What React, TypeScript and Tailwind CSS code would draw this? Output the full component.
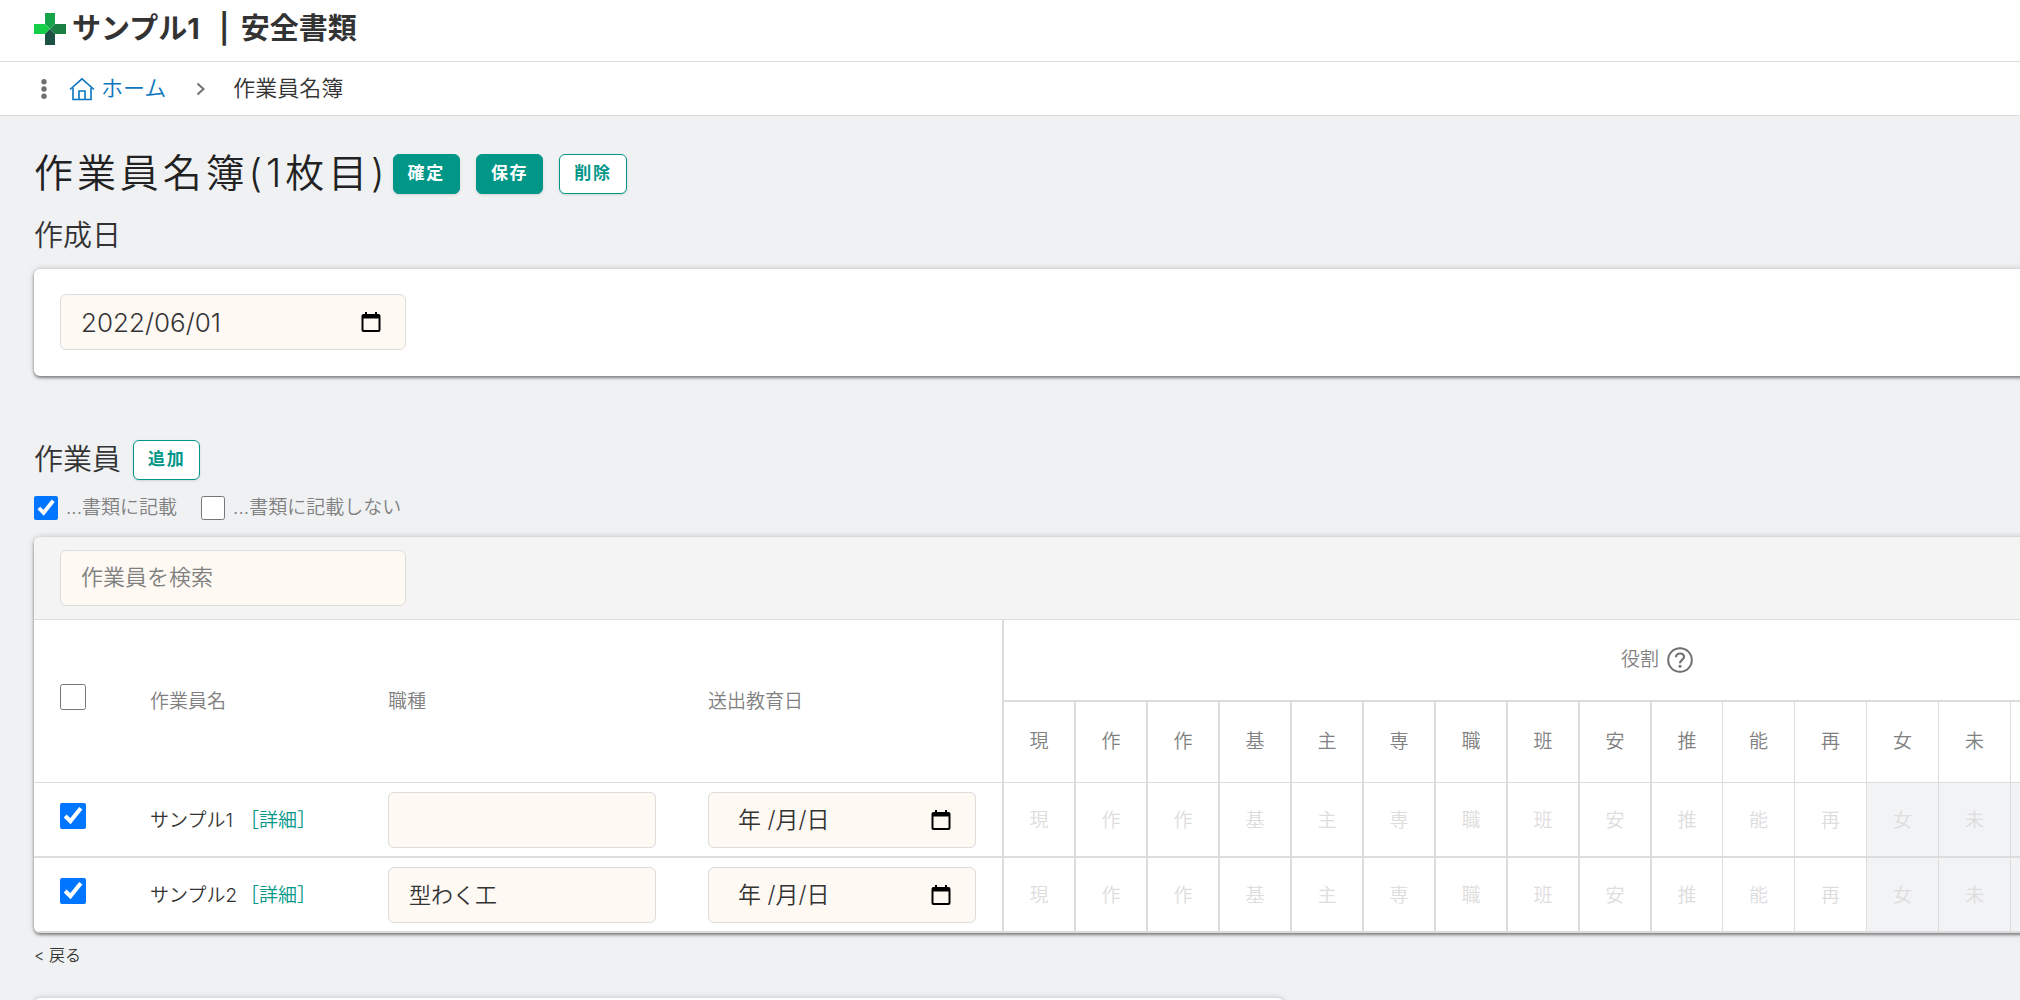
import React from 'react';

const roles = ['現', '作', '作', '基', '主', '専', '職', '班', '安', '推', '能', '再', '女', '未', '', '', '', ''];

const workers = [
  { id: 1, name: 'サンプル1', job: '' },
  { id: 2, name: 'サンプル2', job: '型わく工' },
];

const cardShadow = 'shadow-[0_2px_3px_rgba(0,0,0,0.4),0_0_6px_rgba(0,0,0,0.2)]';
const field = 'h-14 rounded-md border border-[#dcdcdc] bg-[#fef9f3] text-[#333]';

function Logo() {
  return (
    <svg width="32" height="32" viewBox="0 0 32 32" aria-hidden="true">
      <path d="M11 0h10v11l-5 5-5-5z" fill="#16a34a" />
      <path d="M0 11h11l5 5-5 5H0z" fill="#15cf49" />
      <path d="M32 11H21l-5 5 5 5h11z" fill="#1a7f43" />
      <path d="M11 32h10V21l-5-5-5 5z" fill="#1b5244" />
    </svg>
  );
}

function HomeIcon() {
  return (
    <svg width="26" height="24" viewBox="0 0 26 24" fill="none" stroke="currentColor" strokeWidth="1.6" aria-hidden="true">
      <path d="M1 12.5 13 1.8l12 10.7" />
      <path d="M4 10.5V22.5h18V10.5" />
      <path d="M10 22.5V14h6v8.5" />
    </svg>
  );
}

function CalendarIcon() {
  return (
    <svg width="20" height="20" viewBox="0 0 20 20" aria-hidden="true">
      <path d="M4 0h2v2h8V0h2v2h1.500a2 2 0 0 1 2 2v14a2 2 0 0 1-2 2h-15a2 2 0 0 1-2-2V4a2 2 0 0 1 2-2H4zM2.500 6.500V18h15V6.500z" fill="#000" fillRule="evenodd" />
    </svg>
  );
}

function HelpIcon() {
  return (
    <svg width="26" height="26" viewBox="0 0 26 26" fill="none" stroke="#707070" strokeWidth="2" aria-hidden="true">
      <circle cx="13" cy="13" r="11.800" />
      <path d="M9 10.300c0-2.200 1.700-3.800 4-3.800s4 1.500 4 3.600c0 2.700-4 3-4 6.100" strokeWidth="2.200" />
      <circle cx="13" cy="19.300" r="1.500" fill="#707070" stroke="none" />
    </svg>
  );
}

function DateField({ id, label, value, className, inputClass }: { id: string; label: string; value: string; className: string; inputClass: string }) {
  return (
    <div className={`flex items-center ${field} ${className}`}>
      <input id={id} type="text" aria-label={label} defaultValue={value} className={`h-full min-w-0 flex-1 bg-transparent outline-none ${inputClass}`} />
      <button type="button" aria-label="カレンダーを開く" className="mr-6 shrink-0">
        <CalendarIcon />
      </button>
    </div>
  );
}

function Button({ children, primary = false }: { children: React.ReactNode; primary?: boolean }) {
  return (
    <button
      type="button"
      className={`h-10 rounded-md border border-[#009688] px-3.5 text-[17px] font-bold tracking-widest shadow-sm ${
        primary ? 'bg-[#009688] text-white' : 'bg-white text-[#009688]'
      }`}
    >
      {children}
    </button>
  );
}

export default function App() {
  return (
    <div className="h-screen overflow-hidden bg-[#eff1f3] font-['Inter','Noto_Sans_CJK_JP',sans-serif] font-[350] text-[#333]">
      <header className="flex h-[62px] items-center gap-1.5 border-b border-[#dcdcdc] bg-white pb-1 pl-[34px]">
        <Logo />
        <p className="text-[29px] font-bold leading-10">
          サンプル1<span className="ml-3 mr-1 font-semibold"> | </span>安全書類
        </p>
      </header>

      <nav aria-label="パンくずリスト" className="flex h-[54px] items-center border-b border-[#dcdcdc] bg-white pl-10 text-[22px]">
        <svg width="8" height="20" viewBox="0 0 8 20" fill="#707070" aria-hidden="true">
          <circle cx="4" cy="2.700" r="2.700" />
          <circle cx="4" cy="10" r="2.700" />
          <circle cx="4" cy="17.300" r="2.700" />
        </svg>
        <a href="#home" className="ml-[21px] flex items-center gap-1.5 text-[#0b76bd]">
          <HomeIcon />
          ホーム
        </a>
        <svg width="10" height="14" viewBox="0 0 10 14" fill="none" stroke="#707070" strokeWidth="2" className="ml-[30px]" aria-hidden="true">
          <path d="m1.500 1.500 6 5.500-6 5.500" />
        </svg>
        <span className="ml-[27px]">作業員名簿</span>
      </nav>

      <main className="w-max min-w-full pl-[34px] pt-8">
        <div className="flex h-[51px] items-center gap-1">
          <h1 className="text-[39px] tracking-widest text-[#222]">作業員名簿(1枚目)</h1>
          <div className="flex gap-4">
            <Button primary>確定</Button>
            <Button primary>保存</Button>
            <Button>削除</Button>
          </div>
        </div>

        <h2 className="mb-3 mt-4 text-[29px] leading-[42px]">作成日</h2>
        <section className={`rounded-md bg-white px-[26px] pb-[26px] pt-[25px] ${cardShadow}`}>
          <DateField id="created-on" label="作成日" value="2022/06/01" className="w-[346px]" inputClass="pl-5 text-[26px]" />
        </section>

        <div className="mt-16 flex items-center gap-3">
          <h2 className="text-[29px] leading-10">作業員</h2>
          <Button>追加</Button>
        </div>
        <div className="mt-4 flex items-center gap-6 text-[19px] leading-6 text-[#808080]">
          <label className="flex items-center gap-2">
            <input type="checkbox" defaultChecked className="size-6 accent-[#0075ff]" />
            ...書類に記載
          </label>
          <label className="flex items-center gap-2">
            <input type="checkbox" className="size-6" />
            ...書類に記載しない
          </label>
        </div>

        <section className={`mt-[17px] overflow-hidden rounded-md bg-white ${cardShadow}`}>
          <div className="border-b border-[#dcdcdc] bg-[#f4f4f4] px-[26px] py-[13px]">
            <input
              type="text"
              aria-label="作業員を検索"
              placeholder="作業員を検索"
              className={`block w-[346px] pb-0.5 pl-5 text-[22px] placeholder:text-[#808080] ${field}`}
            />
          </div>

          <table className="w-[2264px] table-fixed border-separate border-spacing-0 text-[19px]">
            <colgroup>
              <col className="w-[90px]" />
              <col className="w-[238px]" />
              <col className="w-[320px]" />
              <col className="w-[320px]" />
              {roles.map((_, i) => (
                <col key={i} className="w-[72px]" />
              ))}
            </colgroup>
            <thead className="text-[#808080]">
              <tr className="h-[82px]">
                <th rowSpan={2} className="border-b border-[#dcdcdc] pb-2 pl-[26px] text-left">
                  <input type="checkbox" aria-label="すべて選択" className="block size-[26px]" />
                </th>
                <th rowSpan={2} className="border-b border-[#dcdcdc] pl-[26px] pt-0.5 text-left font-[350]">作業員名</th>
                <th rowSpan={2} className="border-b border-[#dcdcdc] pl-[26px] pt-0.5 text-left font-[350]">職種</th>
                <th rowSpan={2} className="border-b border-[#dcdcdc] pl-[26px] pt-0.5 text-left font-[350]">送出教育日</th>
                <th colSpan={roles.length} className="border-b-2 border-l-2 border-[#dcdcdc] pl-3 font-[350]">
                  <span className="flex items-center justify-center gap-2">
                    役割
                    <HelpIcon />
                  </span>
                </th>
              </tr>
              <tr className="h-[81px]">
                {roles.map((role, i) => (
                  <th key={i} className={`border-b border-[#dcdcdc] font-[350] ${i < 10 ? 'border-l-2' : 'border-l'}`}>
                    {role}
                  </th>
                ))}
              </tr>
            </thead>
            <tbody>
              {workers.map((worker) => (
                <tr key={worker.id} className="h-[75px]">
                  <td className="border-b-2 border-[#dcdcdc] pb-2 pl-[26px]">
                    <input type="checkbox" defaultChecked aria-label={worker.name} className="block size-[26px] accent-[#0075ff]" />
                  </td>
                  <td className="border-b-2 border-[#dcdcdc] pl-[26px] pt-1">
                    <span className="flex gap-0.5">
                      <span className="min-w-[88px]">{worker.name}</span>
                      <a href={`#worker-${worker.id}`} className="text-[#009688]">［詳細］</a>
                    </span>
                  </td>
                  <td className="border-b-2 border-[#dcdcdc] px-[26px]">
                    <input type="text" aria-label={`${worker.name}の職種`} defaultValue={worker.job} className={`block w-full px-5 pb-1 text-[22px] ${field}`} />
                  </td>
                  <td className="border-b-2 border-[#dcdcdc] px-[26px]">
                    <DateField
                      id={`sent-on-${worker.id}`}
                      label={`${worker.name}の送出教育日`}
                      value="年 /月/日"
                      className="w-full"
                      inputClass="pb-1 pl-[29px] text-[23px]"
                    />
                  </td>
                  {roles.map((role, i) => (
                    <td
                      key={i}
                      className={`border-b-2 border-[#dcdcdc] pt-1 text-center text-[#ddd] ${i < 10 ? 'border-l-2' : 'border-l'} ${
                        i > 11 ? 'bg-[#f2f3f5]' : ''
                      }`}
                    >
                      {role}
                    </td>
                  ))}
                </tr>
              ))}
            </tbody>
          </table>
        </section>

        <a href="#back" className="mt-2.5 block w-fit text-base leading-6">&lt; 戻る</a>

        <section className={`mt-[31px] h-40 w-[1250px] rounded-md bg-white ${cardShadow}`} />
      </main>
    </div>
  );
}
